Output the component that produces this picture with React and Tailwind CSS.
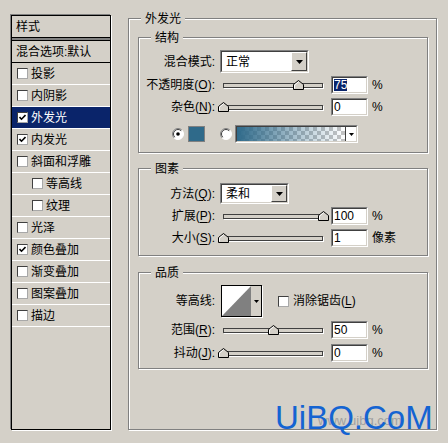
import React from "react";

const sunkOuter = "border border-t-[#808080] border-l-[#808080] border-r-white border-b-white";
const sunkInner = "border border-t-[#404040] border-l-[#404040] border-r-[#d4d0c8] border-b-[#d4d0c8]";
const raised = "border border-t-white border-l-white border-r-[#404040] border-b-[#404040]";

function Tri({ w = 7, h = 4 }) {
  return (
    <svg width={w} height={h} viewBox={`0 0 ${w} ${h}`}>
      <polygon points={`0,0 ${w},0 ${w / 2},${h}`} fill="#000" />
    </svg>
  );
}

function Check({ checked }) {
  return (
    <div className="w-[11px] h-[11px] shrink-0 bg-white border border-t-[#404040] border-l-[#404040] border-r-[#a8a8a8] border-b-[#a8a8a8] flex items-center justify-center">
      {checked && (
        <svg width="7" height="7" viewBox="0 0 7 7">
          <polyline points="0.5,3 2.5,5.2 6.5,1" fill="none" stroke="#000" strokeWidth="1.6" />
        </svg>
      )}
    </div>
  );
}

function Radio({ checked }) {
  return (
    <svg width="12" height="12" viewBox="0 0 12 12" className="shrink-0">
      <circle cx="6" cy="6" r="5.5" fill="#fff" />
      <path d="M2.11 9.89 A5.5 5.5 0 0 1 9.89 2.11" stroke="#808080" fill="none" />
      <path d="M9.89 2.11 A5.5 5.5 0 0 1 2.11 9.89" stroke="#fff" fill="none" />
      <path d="M2.8 9.2 A4.5 4.5 0 0 1 9.2 2.8" stroke="#404040" fill="none" />
      {checked && <circle cx="6" cy="6" r="1.8" fill="#000" />}
    </svg>
  );
}

function U({ children }) {
  return <span className="underline underline-offset-2">{children}</span>;
}

function Label({ children }) {
  return <div className="w-[76px] shrink-0 text-right leading-[14px] whitespace-nowrap">{children}</div>;
}

function Slider({ value }) {
  return (
    <div className="relative ml-[3px] w-[110px] h-[10px] shrink-0">
      <div className="ml-[5px] mt-[3px] w-[100px] h-[5px] border border-[#404040] bg-[#d4d0c8] shadow-[1px_1px_0_#fff]" />
      <svg width="11" height="10" viewBox="0 0 11 10" className="absolute top-0" style={{ left: value }}>
        <path d="M0.5 9.5 V4.5 L5.5 0.5 L10.5 4.5 V9.5 Z" fill="#d4d0c8" stroke="#000" />
        <path d="M1.5 8.5 V5 L5.5 1.8" fill="none" stroke="#fff" />
      </svg>
    </div>
  );
}

function NumBox({ value, selected }) {
  return (
    <div className={"ml-[3px] w-[37px] h-[18px] shrink-0 " + sunkOuter}>
      <div className={"h-full bg-white flex items-stretch pl-[1px] py-[1px] " + sunkInner}>
        <span className={"flex items-center leading-none " + (selected ? "bg-[#0a246a] text-white" : "")}>{value}</span>
      </div>
    </div>
  );
}

function SliderRow({ label, value, num, unit = "%", selected, className = "" }) {
  return (
    <div className={"flex items-center h-[18px] " + className}>
      <Label>{label}</Label>
      <Slider value={value} />
      <NumBox value={num} selected={selected} />
      <span className="ml-[4px] leading-[14px] whitespace-nowrap">{unit}</span>
    </div>
  );
}

function Select({ value, className }) {
  return (
    <div className={"ml-[5px] shrink-0 " + sunkOuter + " " + className}>
      <div className={"h-full bg-white flex items-stretch " + sunkInner}>
        <div className="flex-1 flex items-center pl-[4px] leading-[14px]">{value}</div>
        <div className={"w-[16px] bg-[#d4d0c8] flex items-center justify-center " + raised}>
          <Tri />
        </div>
      </div>
    </div>
  );
}

function Group({ title, className = "", children }) {
  return (
    <div className={"relative border border-[#808080] shadow-[inset_1px_1px_0_#fff,1px_1px_0_#fff] " + className}>
      <span className="absolute -top-[7px] left-[12px] px-[4px] bg-[#d4d0c8] leading-[14px] whitespace-nowrap">{title}</span>
      {children}
    </div>
  );
}

const items = [
  { t: "投影" },
  { t: "内阴影" },
  { t: "外发光", c: true, sel: true },
  { t: "内发光", c: true },
  { t: "斜面和浮雕" },
  { t: "等高线", sub: true },
  { t: "纹理", sub: true },
  { t: "光泽" },
  { t: "颜色叠加", c: true },
  { t: "渐变叠加" },
  { t: "图案叠加" },
  { t: "描边" },
];

export default function App() {
  return (
    <div className="relative w-[448px] h-[443px] overflow-hidden bg-[#d4d0c8] text-black text-[12px] font-['Liberation_Sans','Noto_Sans_CJK_SC',sans-serif] flex items-start pl-[11px] pt-[15px]">
      {/* Left styles list */}
      <div className="w-[100px] h-[415px] shrink-0 border border-black shadow-[-1px_-1px_0_#808080,1px_1px_0_#fff] flex flex-col">
        <div className="h-[22px] border-b border-black flex items-center pl-[4px] leading-[14px]">样式</div>
        <div className="h-[2px] bg-[#808080]" />
        <div className="h-[23px] border-t border-b border-black flex items-center pl-[4px] leading-[14px] whitespace-nowrap">
          混合选项:默认
        </div>
        {items.map((it) => (
          <div
            key={it.t}
            className={
              "h-[22px] border-b border-white flex items-center leading-[14px] whitespace-nowrap " +
              (it.sub ? "pl-[20px] " : "pl-[5px] ") +
              (it.sel ? "bg-[#0a246a] text-white" : "")
            }
          >
            <Check checked={it.c} />
            <span className="ml-[3px]">{it.t}</span>
          </div>
        ))}
      </div>

      {/* Right panel */}
      <Group title="外发光" className="ml-[17px] mt-[3px] w-[309px] h-[412px] shrink-0 pl-[9px] pt-[18px]">
        {/* 结构 */}
        <Group title="结构" className="w-[290px] h-[116px] pt-[12px]">
          <div className="flex items-center h-[23px]">
            <Label>混合模式:</Label>
            <Select value="正常" className="w-[89px] h-[23px]" />
          </div>
          <SliderRow className="mt-[3px]" label={<>不透明度(<U>O</U>):</>} value={75} num="75" selected />
          <SliderRow className="mt-[4px]" label={<>杂色(<U>N</U>):</>} value={0} num="0" />
          <div className="flex items-center h-[18px] mt-[9px] pl-[33px]">
            <Radio checked />
            <div className="ml-[4px] w-[17px] h-[16px] border border-[#808080] bg-[#2f6a8a]" />
            <div className="ml-[15px]">
              <Radio />
            </div>
            <div className={"ml-[3px] w-[123px] h-[18px] " + sunkOuter}>
              <div className={"h-full flex " + sunkInner}>
                <div className="flex-1 bg-[image:linear-gradient(to_right,#2f6a8a,rgba(47,106,138,0.35)_60%,rgba(47,106,138,0)),repeating-conic-gradient(#c4c4c4_0%_25%,#fff_0%_50%)] bg-[length:100%_100%,8px_8px]" />
                <div className="w-[11px] bg-white border-l border-[#404040] flex items-center justify-center">
                  <Tri w={5} h={3} />
                </div>
              </div>
            </div>
          </div>
        </Group>

        {/* 图素 */}
        <Group title="图素" className="mt-[15px] w-[290px] h-[88px] pt-[14px]">
          <div className="flex items-center h-[21px]">
            <Label>方法(<U>Q</U>):</Label>
            <Select value="柔和" className="w-[69px] h-[21px]" />
          </div>
          <SliderRow className="mt-[3px]" label={<>扩展(<U>P</U>):</>} value={100} num="100" />
          <SliderRow className="mt-[4px]" label={<>大小(<U>S</U>):</>} value={0} num="1" unit="像素" />
        </Group>

        {/* 品质 */}
        <Group title="品质" className="mt-[16px] w-[290px] h-[97px] pt-[12px]">
          <div className="flex items-center h-[32px]">
            <Label>等高线:</Label>
            <div className="ml-[6px] w-[41px] h-[32px] shrink-0 border border-black shadow-[1px_1px_0_#fff] flex">
              <svg width="29" height="30" viewBox="0 0 29 30" className="shrink-0">
                <rect x="0" y="0" width="29" height="30" fill="#fff" />
                <polygon points="0,30 29,0 29,30" fill="#808080" />
              </svg>
              <div className="flex-1 bg-[#d4d0c8] flex items-center justify-center">
                <Tri w={5} h={3} />
              </div>
            </div>
            <div className="ml-[16px]">
              <Check />
            </div>
            <span className="ml-[4px] leading-[14px] whitespace-nowrap">
              消除锯齿(<U>L</U>)
            </span>
          </div>
          <SliderRow className="mt-[4px]" label={<>范围(<U>R</U>):</>} value={50} num="50" />
          <SliderRow className="mt-[5px]" label={<>抖动(<U>J</U>):</>} value={0} num="0" />
        </Group>
      </Group>

      {/* Watermark */}
      <span className="absolute left-[318px] top-[414px] text-[13px] leading-[14px] text-[#a0a0a0] font-['Liberation_Sans',sans-serif]">
        www.uibq.com
      </span>
      <span className="absolute left-[275px] top-[401px] text-[33px] leading-[33px] text-[#1464d2] font-['Liberation_Sans',sans-serif] whitespace-nowrap">
        UiBQ.CoM
      </span>
    </div>
  );
}
